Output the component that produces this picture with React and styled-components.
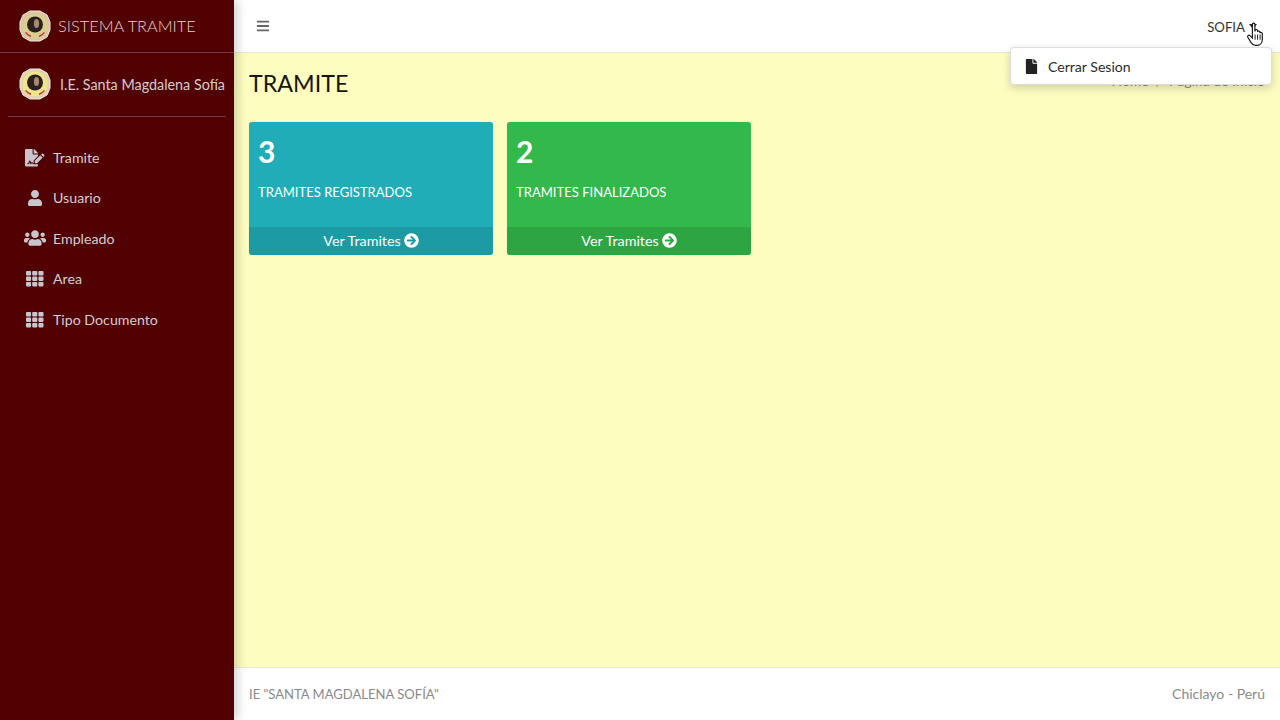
import React from 'react';
import styled, { createGlobalStyle } from 'styled-components';
import { FaFileSignature, FaUser, FaUsers, FaTh, FaFile, FaArrowCircleRight, FaBars } from 'react-icons/fa';

const Global = createGlobalStyle`
  html, body { margin: 0; padding: 0; height: 720px; overflow: hidden; }
  body { font-family: Lato, "Noto Sans", "Liberation Sans", sans-serif; font-size: 15px; color: #212529; }
  * { box-sizing: border-box; }
`;

const Shell = styled.div`
  display: flex;
  width: 1280px;
  height: 720px;
`;

const Sidebar = styled.aside`
  width: 234px;
  flex: none;
  background: #510101;
  box-shadow: 3px 0 10px rgba(0, 0, 0, 0.2);
  z-index: 2;
`;

const Brand = styled.div`
  height: 53px;
  display: flex;
  align-items: center;
  gap: 7px;
  padding: 0 0 1px 19px;
  border-bottom: 1px solid #6e3a4a;
  color: #e2cfd0;
  font-size: 16.35px;
  font-weight: 300;
`;

const UserPanel = styled.div`
  height: 64px;
  margin: 0 8px;
  display: flex;
  align-items: center;
  gap: 9px;
  padding: 0 0 1px 11px;
  border-bottom: 1px solid #6e3a4a;
  color: #d4cbd0;
  font-size: 14.35px;
  white-space: nowrap;
`;

const Menu = styled.nav`
  display: flex;
  flex-direction: column;
  padding-top: 20px;
`;

const MenuItem = styled.a`
  height: 40.5px;
  display: flex;
  align-items: center;
  color: #d3cdd2;
  font-size: 14.2px;
`;

const MenuIcon = styled.span`
  width: 53px;
  flex: none;
  display: flex;
  justify-content: center;
  padding-left: 17px;
  font-size: ${(p) => p.$size}px;
  color: #c9c5cd;
  svg { display: block; }
`;

const Main = styled.div`
  flex: 1;
  min-width: 0;
  display: flex;
  flex-direction: column;
  position: relative;
`;

const Navbar = styled.header`
  height: 53px;
  flex: none;
  background: #fff;
  border-bottom: 1px solid #e6e6d8;
  display: flex;
  align-items: center;
  justify-content: space-between;
  padding: 0 23px 0 22px;
  color: #666;
`;

const UserToggle = styled.div`
  display: flex;
  align-items: center;
  gap: 4px;
  padding-top: 1px;
  font-size: 13.2px;
  color: #333;
`;

const Caret = styled.span`
  width: 0;
  height: 0;
  border-left: 4.5px solid transparent;
  border-right: 4.5px solid transparent;
  border-top: 5px solid #222;
`;

const Dropdown = styled.div`
  position: absolute;
  top: 47px;
  right: 8px;
  width: 262px;
  height: 38px;
  background: #fff;
  border: 1px solid #ddd;
  border-radius: 4px;
  box-shadow: 0 3px 8px rgba(0, 0, 0, 0.18);
  display: flex;
  align-items: center;
  gap: 9px;
  padding-left: 13px;
  font-size: 14.1px;
  color: #2b2b2b;
  z-index: 3;
`;

const Pointer = styled.svg`
  position: absolute;
  top: 22px;
  right: 15px;
  z-index: 4;
`;

const Content = styled.main`
  flex: 1;
  background: #fdfdc0;
  padding: 13px 15px 0;
`;

const HeaderRow = styled.div`
  display: flex;
  align-items: center;
  justify-content: space-between;
  height: 34px;
`;

const Title = styled.h1`
  margin: 0;
  font-size: 23.3px;
  font-weight: 400;
  color: #17170f;
`;

const Crumbs = styled.div`
  display: flex;
  gap: 7px;
  font-size: 14px;
  color: #8c8c7a;
  transform: translateY(-3px);
`;

const Cards = styled.div`
  display: flex;
  gap: 14px;
  margin-top: 22px;
`;

const Card = styled.section`
  width: 244px;
  height: 133px;
  background: ${(p) => p.$bg};
  border-radius: 3px;
  color: #fff;
  display: flex;
  flex-direction: column;
  box-shadow: 0 0 1px rgba(0, 0, 0, 0.2);
  overflow: hidden;
`;

const CardBody = styled.div`
  flex: 1;
  padding: 10px 9px;
`;

const Count = styled.div`
  font-size: 30px;
  font-weight: 700;
  line-height: 38px;
`;

const CardLabel = styled.div`
  margin-top: 12px;
  font-size: 13.05px;
  line-height: 20px;
  white-space: nowrap;
`;

const CardFoot = styled.a`
  height: 28px;
  flex: none;
  background: rgba(0, 0, 0, 0.1);
  display: flex;
  align-items: center;
  justify-content: center;
  gap: 3px;
  padding-bottom: 1px;
  font-size: 14.3px;
`;

const Footer = styled.footer`
  height: 53px;
  flex: none;
  background: #fff;
  border-top: 1px solid #e8e8dc;
  display: flex;
  align-items: center;
  justify-content: space-between;
  padding: 0 15px 2px;
  font-size: 14px;
  color: #8a8a8a;
`;

const FooterName = styled.span`
  padding-top: 1px;
  font-size: 13.05px;
`;

function Seal({ face = '#efe58a', rim = '#e3d3b6' }) {
  return (
    <svg width="32" height="32" viewBox="0 0 32 32" style={{ flex: 'none' }}>
      <polygon points="11,1 21,1 28,5 31,12 31,20 28,27 21,31 11,31 4,27 1,20 1,12 4,5" fill={rim} stroke="#f2e8d8" strokeWidth="1" />
      <circle cx="16" cy="16" r="12.5" fill={face} />
      <path d="M6 23 Q9 26 12 27 L12 25.5 Q9 24.5 7 22 Z" fill="#c0342c" />
      <path d="M26 23 Q23 26 20 27 L20 25.5 Q23 24.5 25 22 Z" fill="#c0342c" />
      <circle cx="16" cy="14.5" r="8" fill="#2a2020" />
      <ellipse cx="17.5" cy="13.5" rx="2.6" ry="4.5" fill="#a8886e" />
    </svg>
  );
}

const items = [
  { label: 'Tramite', icon: FaFileSignature, size: 19.5 },
  { label: 'Usuario', icon: FaUser, size: 16 },
  { label: 'Empleado', icon: FaUsers, size: 22 },
  { label: 'Area', icon: FaTh, size: 17.5 },
  { label: 'Tipo Documento', icon: FaTh, size: 17.5 },
];

export default function App() {
  return (
    <Shell>
      <Global />
      <Sidebar>
        <Brand><Seal face="#dccf8e" rim="#d9c4a6" />SISTEMA TRAMITE</Brand>
        <UserPanel><Seal />I.E. Santa Magdalena Sofía</UserPanel>
        <Menu>
          {items.map((it) => (
            <MenuItem key={it.label}>
              <MenuIcon $size={it.size}><it.icon /></MenuIcon>
              {it.label}
            </MenuItem>
          ))}
        </Menu>
      </Sidebar>
      <Main>
        <Navbar>
          <FaBars size={14} />
          <UserToggle>SOFIA <Caret /></UserToggle>
        </Navbar>
        <Dropdown><FaFile size={15} color="#222" />Cerrar Sesion</Dropdown>
        <Pointer width="19" height="25" viewBox="0 0 18 24">
          <path d="M6 2.2c0-1.5 2.4-1.5 2.4 0V9l.3-1c.4-1.2 2.3-1 2.3.4v1c.4-1.2 2.3-1 2.3.4v.8c.5-1 2.2-.7 2.2.6V17c0 3-2 5.5-5 5.5H9c-2 0-3-1-4-2.5L1.6 14.6c-.8-1.3 1-2.6 2.1-1.5L6 15.4V2.2z" fill="#fff" stroke="#111" strokeWidth="1.1" />
          <path d="M8.6 12v5M11 12v5M13.4 12v5" stroke="#111" strokeWidth="0.9" />
        </Pointer>
        <Content>
          <HeaderRow>
            <Title>TRAMITE</Title>
            <Crumbs><span>Home</span><span>/</span><span>Pagina de Inicio</span></Crumbs>
          </HeaderRow>
          <Cards>
            <Card $bg="#20adb8">
              <CardBody>
                <Count>3</Count>
                <CardLabel>TRAMITES REGISTRADOS</CardLabel>
              </CardBody>
              <CardFoot>Ver Tramites <FaArrowCircleRight size={15} /></CardFoot>
            </Card>
            <Card $bg="#33b84b">
              <CardBody>
                <Count>2</Count>
                <CardLabel>TRAMITES FINALIZADOS</CardLabel>
              </CardBody>
              <CardFoot>Ver Tramites <FaArrowCircleRight size={15} /></CardFoot>
            </Card>
          </Cards>
        </Content>
        <Footer>
          <FooterName>IE "SANTA MAGDALENA SOFÍA"</FooterName>
          <span>Chiclayo - Perú</span>
        </Footer>
      </Main>
    </Shell>
  );
}
